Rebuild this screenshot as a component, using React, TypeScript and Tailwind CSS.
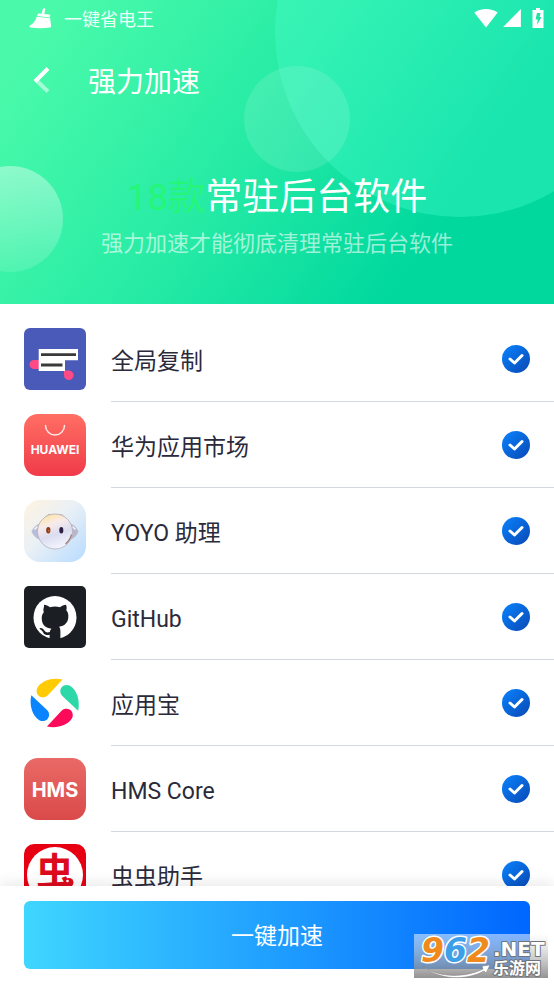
import React, { useState } from "react";

const GlobalCopyIcon = () => (
  <svg viewBox="0 0 62 62" className="w-full h-full" aria-hidden="true">
    <rect width="62" height="62" rx="6" fill="#4a5ab9" />
    <path d="M10 32h5v9h-5a4.500 4.500 0 0 1 0-9z" fill="#ff4a86" />
    <path d="M40 42.500h5a4.800 4.800 0 1 1-5 5z" fill="#ff4a86" />
    <path d="M14.700 21H54v11.300H41v10.700H14.700z" fill="#fff" />
    <path d="M17 26.700h35M17 37h21.500" stroke="#3a3a3a" strokeWidth="2.800" />
  </svg>
);

const HuaweiIcon = () => (
  <svg viewBox="0 0 62 62" className="w-full h-full" aria-hidden="true">
    <defs>
      <linearGradient id="huawei" x1="0" y1="0" x2="0" y2="1">
        <stop offset="0" stopColor="#ff6f63" />
        <stop offset="1" stopColor="#f03a4a" />
      </linearGradient>
    </defs>
    <rect width="62" height="62" rx="14" fill="url(#huawei)" />
    <path
      d="M21.500 11.500a9.500 9.500 0 0 0 19 0"
      fill="none"
      stroke="#fff"
      strokeOpacity=".85"
      strokeWidth="1.500"
      strokeLinecap="round"
    />
    <text
      x="31"
      y="40"
      textAnchor="middle"
      fill="#fff"
      fontSize="12"
      fontWeight="700"
      fontFamily="Inter, sans-serif"
    >
      HUAWEI
    </text>
  </svg>
);

const YoyoIcon = () => (
  <svg viewBox="0 0 62 62" className="w-full h-full" aria-hidden="true">
    <defs>
      <linearGradient id="yoyoBg" x1="0" y1="0" x2="1" y2="1">
        <stop offset="0" stopColor="#fff3e0" />
        <stop offset=".45" stopColor="#e9f0f6" />
        <stop offset="1" stopColor="#b7dbff" />
      </linearGradient>
      <linearGradient id="yoyoFace" x1=".25" y1="0" x2=".6" y2="1">
        <stop offset="0" stopColor="#ffe2a0" />
        <stop offset=".3" stopColor="#f8ecea" />
        <stop offset=".6" stopColor="#dcdcf0" />
        <stop offset="1" stopColor="#f3f7ff" />
      </linearGradient>
    </defs>
    <rect width="62" height="62" rx="16" fill="url(#yoyoBg)" />
    <path d="M15 24c-3 1-6 4-7.500 7.500 1.500 4 4.500 6.500 7.500 8z" fill="#b9bdd8" />
    <path d="M47 24c3 1 6 4 7.500 7.500-1.500 4-4.500 6.500-7.500 8z" fill="#b9b6c8" />
    <path d="M10.500 29.500l3-3M51.500 29.500l-3-3" stroke="#f2f4ff" strokeWidth="1.500" />
    <path
      d="M13.500 26l10.500-11.500h14L48.500 26"
      fill="none"
      stroke="#bdb5b0"
      strokeWidth=".9"
    />
    <circle cx="31" cy="31.500" r="17.500" fill="url(#yoyoFace)" stroke="#b3aebb" strokeWidth=".8" />
    <path d="M47.500 34.500c-1 4-3 7-6 9.500" stroke="#9c7f76" strokeWidth="1.200" fill="none" />
    <ellipse cx="24.300" cy="30.300" rx="2.100" ry="3.200" fill="#8a3c1c" />
    <ellipse cx="24.800" cy="30.800" rx=".7" ry="1.400" fill="#c8692e" />
    <ellipse cx="37.300" cy="30.300" rx="2" ry="3.200" fill="#2b2144" />
  </svg>
);

const GithubIcon = () => (
  <svg viewBox="0 0 62 62" className="w-full h-full" aria-hidden="true">
    <rect width="62" height="62" rx="5" fill="#1b1f23" />
    <circle cx="31" cy="31.500" r="21.500" fill="#fff" />
    <path
      fill="#1b1f23"
      d="M20 18.700c2 0 4.200 1.200 6 2.500 3.200-.8 6.800-.8 10 0 1.800-1.300 4-2.500 6-2.500.9 2.200.8 4 .3 5.500 1.700 1.900 2.300 4.200 2 7.300-.5 5.500-3.700 8.400-9.200 9.200 1 1.300 1.300 2.600 1.300 4.500V54H25.600v-5.200c-2.800.5-4.900.1-6.200-1.800-.9-1.500-1.700-3-3.400-3.700-.8-.5-.6-1.100.3-1.200 2-.1 3.300 1.200 4.300 2.700 1.200 1.700 3 2 5.200 1.200.2-1.300.7-2.500 1.700-3.300-5.800-.8-9.200-3.600-9.700-9.200-.3-3.100.3-5.400 2-7.300-.5-1.500-.6-3.300.2-5.500z"
    />
  </svg>
);

const YingyongbaoIcon = () => {
  const petal = "M38.500 7.600C29 5.300 17.500 8.500 13.200 16C11 21.500 15 26 20 25.300C22.500 25 23.800 23.400 25.500 21.500Z";
  return (
    <svg viewBox="0 0 62 62" className="w-full h-full" aria-hidden="true">
      <path d={petal} fill="#ffcb05" />
      <path d={petal} fill="#2dd8a8" transform="rotate(90 30.700 31)" />
      <path d={petal} fill="#fc0b5b" transform="rotate(180 30.700 31)" />
      <path d={petal} fill="#0a84ff" transform="rotate(270 30.700 31)" />
    </svg>
  );
};

const HmsIcon = () => (
  <svg viewBox="0 0 62 62" className="w-full h-full" aria-hidden="true">
    <defs>
      <linearGradient id="hms" x1="0" y1="0" x2="0" y2="1">
        <stop offset="0" stopColor="#e96a66" />
        <stop offset="1" stopColor="#da4a4a" />
      </linearGradient>
    </defs>
    <rect width="62" height="62" rx="14" fill="url(#hms)" />
    <text
      x="31"
      y="38.500"
      textAnchor="middle"
      fill="#fff"
      fontSize="20"
      fontWeight="700"
      fontFamily="Inter, sans-serif"
    >
      HMS
    </text>
  </svg>
);

const ChongchongIcon = () => (
  <svg viewBox="0 0 62 62" className="w-full h-full" aria-hidden="true">
    <rect width="62" height="62" rx="10" fill="#e60012" />
    <circle cx="31" cy="31" r="28" fill="#fff" />
    <text
      x="31"
      y="41"
      textAnchor="middle"
      fill="#dc0a1c"
      fontSize="38"
      fontWeight="700"
      fontFamily="'Noto Sans CJK SC', sans-serif"
    >
      虫
    </text>
    <circle cx="45" cy="38.500" r="4.500" fill="#dc0a1c" />
    <circle cx="43.500" cy="37" r="1.300" fill="#fff" />
  </svg>
);

const apps = [
  { id: "copy", name: "全局复制", icon: <GlobalCopyIcon /> },
  { id: "huawei", name: "华为应用市场", icon: <HuaweiIcon /> },
  { id: "yoyo", name: "YOYO 助理", icon: <YoyoIcon /> },
  { id: "github", name: "GitHub", icon: <GithubIcon /> },
  { id: "yyb", name: "应用宝", icon: <YingyongbaoIcon /> },
  { id: "hms", name: "HMS Core", icon: <HmsIcon /> },
  { id: "chong", name: "虫虫助手", icon: <ChongchongIcon /> },
];

const StatusBar = () => (
  <div className="flex items-center justify-between h-9 pl-7 pr-2">
    <div className="flex items-center gap-3">
      <svg viewBox="0 0 24 24" className="w-6 h-6" fill="#fff" aria-hidden="true">
        <path d="M14.800 3.200c.5-1.500 2.800-1.200 2.500.4l-1.100 4.300 5 .5c.8.100 1.100.6 1 1.300l-.3 1.800-12.900-1.400.6-1.400c.3-.8.800-1.300 1.600-1.200l2.300.2z" />
        <path d="M8.700 10.800l13.400 1.400 1 7.900c.1.900-.3 1.400-1.200 1.500-6 .8-13.500.8-19.300 0-1-.2-1.400-1.300-.6-2 3-1.900 5.700-4.800 6.700-8.800z" />
      </svg>
      <span className="pt-1 text-lg leading-7 text-white/90">一键省电王</span>
    </div>
    <div className="flex items-center">
      <svg viewBox="0 0 24 20" className="w-6 h-5" fill="#fff" aria-hidden="true">
        <path d="M12 19.500L.3 4.600C6.500-.3 17.500-.3 23.700 4.600z" />
      </svg>
      <svg viewBox="0 0 18 18" className="w-5 h-5 ml-1" fill="#fff" aria-hidden="true">
        <path d="M17 1v16H1z" />
      </svg>
      <svg viewBox="0 0 12 20" className="w-3 h-5 ml-2.5 mr-0.5" aria-hidden="true">
        <path d="M4 0h4v2h3.500v18H.5V2H4z" fill="#fff" />
        <path d="M5 5h3.500L7.600 9H9.500L5 17l.8-5.500H3.500z" fill="#20e0a4" />
      </svg>
    </div>
  </div>
);

const HeaderBackground = () => (
  <svg
    viewBox="0 0 554 304"
    preserveAspectRatio="xMidYMid slice"
    className="absolute inset-0 w-full h-full"
    aria-hidden="true"
  >
    <defs>
      <linearGradient id="bubble" x1="0" y1="0" x2="0" y2="1">
        <stop offset="0" stopColor="#fff" stopOpacity=".4" />
        <stop offset="1" stopColor="#fff" stopOpacity=".12" />
      </linearGradient>
    </defs>
    <circle cx="460" cy="32" r="185" fill="#4cffd0" fillOpacity=".34" />
    <circle cx="297" cy="119" r="53" fill="#fff" fillOpacity=".12" />
    <circle cx="10" cy="219" r="53" fill="url(#bubble)" />
  </svg>
);

const Watermark = () => (
  <svg
    viewBox="0 0 134 44"
    className="absolute right-1.5 bottom-1.5 w-[134px] h-11 overflow-visible pointer-events-none"
    aria-hidden="true"
  >
    <defs>
      <linearGradient id="markBg" x1="0" y1="0" x2="0" y2="1">
        <stop offset="0" stopColor="#ffffff" stopOpacity=".5" />
        <stop offset="1" stopColor="#777777" stopOpacity=".8" />
      </linearGradient>
    </defs>
    <rect width="134" height="44" fill="url(#markBg)" />
    <g
      fontFamily="'DejaVu Sans', sans-serif"
      fontWeight="700"
      fontStyle="italic"
      fontSize="33"
      stroke="#fff"
      strokeWidth="3"
      strokeLinejoin="round"
      style={{ paintOrder: "stroke" }}
    >
      <text x="7" y="28" fill="#f08a1d">
        9<tspan fill="#3d9fe8">6</tspan>2
      </text>
    </g>
    <path
      d="M9 32c17 13 44 11 60 3l-1-3 8-1-4 8-2-2C52 47 24 46 9 32z"
      fill="#fff"
      stroke="#777"
      strokeWidth=".5"
    />
    <g
      fill="#fff"
      stroke="#70757c"
      strokeWidth="2"
      strokeLinejoin="round"
      style={{ paintOrder: "stroke" }}
      fontWeight="700"
    >
      <text x="79" y="22" fontSize="20" fontFamily="'DejaVu Sans', sans-serif">
        .NET
      </text>
      <text x="79" y="40" fontSize="16" fontFamily="'Noto Sans CJK SC', sans-serif">
        乐游网
      </text>
    </g>
  </svg>
);

const App = () => {
  const [checked, setChecked] = useState<string[]>(apps.map((app) => app.id));

  const toggle = (id: string) => {
    setChecked((prev) =>
      prev.includes(id) ? prev.filter((item) => item !== id) : [...prev, id]
    );
  };

  return (
    <div className="relative flex flex-col h-screen bg-white font-[Roboto,'Noto_Sans_CJK_SC',sans-serif]">
      <header className="relative shrink-0 overflow-hidden bg-[linear-gradient(125deg,#4afaaa_8%,#26eba5_45%,#00d89e_78%)] text-white">
        <HeaderBackground />
        <div className="relative">
          <StatusBar />
          <div className="flex items-center h-22 gap-8 pl-7">
            <button type="button" aria-label="返回" className="w-7 h-7">
              <svg viewBox="0 0 28 28" className="w-7 h-7" fill="none" strokeWidth="4">
                <path d="M8 14l12 11.500" stroke="#fff" strokeOpacity=".5" />
                <path d="M20 2.500L7 15.500" stroke="#fff" />
              </svg>
            </button>
            <h1 className="pt-1.5 text-[28px] leading-10">强力加速</h1>
          </div>
          <div className="pt-12.5 pb-11 text-center">
            <p className="text-[37px] leading-[48px]">
              <span className="text-[#24f778]">18款</span>常驻后台软件
            </p>
            <p className="mt-1.5 text-[22px] leading-8 text-white/60">
              强力加速才能彻底清理常驻后台软件
            </p>
          </div>
        </div>
      </header>

      <ul className="flex-1 min-h-0 pt-3 overflow-y-auto [scrollbar-width:none]">
        {apps.map((app) => (
          <li key={app.id}>
            <label className="flex items-center h-[86px] pl-6 cursor-pointer">
              <span className="shrink-0 w-[62px] h-[62px]">{app.icon}</span>
              <span className="flex flex-1 items-center justify-between h-full ml-[25px] pr-6 border-b border-[#d3d9de]">
                <span className="pt-2 text-[23px] text-[#2b2a3a]">{app.name}</span>
                <span className="relative w-7 h-7">
                  <input
                    type="checkbox"
                    checked={checked.includes(app.id)}
                    onChange={() => toggle(app.id)}
                    className="block w-7 h-7 rounded-full appearance-none border border-gray-300 checked:border-0 checked:bg-linear-to-br checked:from-[#0a84ff] checked:to-[#0a48b4]"
                  />
                  <svg
                    viewBox="0 0 28 28"
                    className="absolute inset-0 w-7 h-7 pointer-events-none"
                    fill="none"
                    stroke="#fff"
                    strokeWidth="3"
                    strokeLinecap="round"
                    strokeLinejoin="round"
                    aria-hidden="true"
                  >
                    <path d="M8 14l4.500 4L20 10.500" />
                  </svg>
                </span>
              </span>
            </label>
          </li>
        ))}
      </ul>

      <footer className="relative shrink-0 px-6 py-[15px] bg-white shadow-[0_-4px_12px_rgba(0,0,0,0.08)]">
        <button
          type="button"
          className="w-full h-[68px] pt-1 rounded-md bg-[linear-gradient(90deg,#3fd6ff,#0066ff)] text-[23px] text-white"
        >
          一键加速
        </button>
      </footer>
      <Watermark />
    </div>
  );
};

export default App;
